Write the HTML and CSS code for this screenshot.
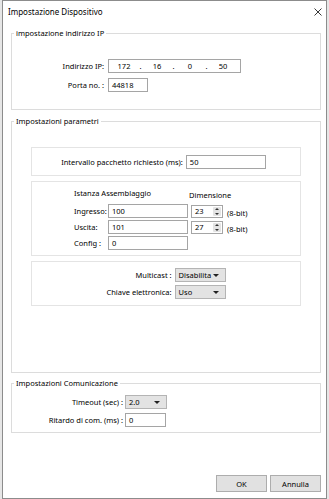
FILE: index.html
```html
<!DOCTYPE html>
<html>
<head>
    <title>Impostazione Dispositivo</title>
    <meta name="viewport" content="width=device-width, initial-scale=1">
    <link rel="stylesheet" href="styles.css">
</head>
<body>
    <div class="window">
        <div class="titlebar">
            <span class="title">Impostazione Dispositivo</span>
            <svg class="close" width="8" height="8" viewBox="0 0 8 8">
                <path d="M0.5 0.5 L7.5 7.5 M7.5 0.5 L0.5 7.5" stroke="#222" stroke-width="0.9" fill="none"/>
            </svg>
        </div>

        <div class="content">
            <!-- Indirizzo IP -->
            <fieldset class="group group-ip">
                <legend>impostazione indirizzo IP</legend>
                <div class="ip-form">
                    <label>Indirizzo IP:</label>
                    <div class="field ip">
                        <span class="seg">172</span><span class="dot">.</span>
                        <span class="seg">16</span><span class="dot">.</span>
                        <span class="seg">0</span><span class="dot">.</span>
                        <span class="seg">50</span>
                    </div>
                    <label>Porta no. :</label>
                    <div class="field port">44818</div>
                </div>
            </fieldset>

            <!-- Parametri -->
            <fieldset class="group group-params">
                <legend>Impostazioni parametri</legend>

                <div class="box box-rpi">
                    <label>Intervallo pacchetto richiesto (ms):</label>
                    <div class="field rpi">50</div>
                </div>

                <div class="box box-asm">
                    <div class="head head-inst">Istanza Assemblaggio</div>
                    <div class="head head-dim">Dimensione</div>

                    <label>Ingresso:</label>
                    <div class="field inst">100</div>
                    <div class="spin"><span>23</span><i class="spin-btn"></i></div>
                    <span class="unit">(8-bit)</span>

                    <label>Uscita:</label>
                    <div class="field inst">101</div>
                    <div class="spin"><span>27</span><i class="spin-btn"></i></div>
                    <span class="unit">(8-bit)</span>

                    <label>Config :</label>
                    <div class="field inst">0</div>
                </div>

                <div class="box box-opt">
                    <label>Multicast :</label>
                    <div class="combo combo-opt">Disabilita</div>
                    <label>Chiave elettronica:</label>
                    <div class="combo combo-opt">Uso</div>
                </div>
            </fieldset>

            <!-- Comunicazione -->
            <fieldset class="group group-com">
                <legend>Impostazioni Comunicazione</legend>
                <div class="com-form">
                    <label>Timeout (sec) :</label>
                    <div class="combo combo-com">2.0</div>
                    <label>Ritardo di com. (ms) :</label>
                    <div class="field delay">0</div>
                </div>
            </fieldset>

            <div class="buttons">
                <button>OK</button>
                <button>Annulla</button>
            </div>
        </div>
    </div>
</body>
</html>
```

FILE: styles.css
```css
* {
    box-sizing: border-box;
}

body {
    margin: 0;
    background-color: #e6e6e6;
    color: #000;
    font-family: "Noto Sans", sans-serif;
    font-size: 7.5px;
}

.window {
    width: 325px;
    height: 499px;
    margin-left: 2px;
    background-color: #fff;
    border: 1px solid #8c8c8c;
    display: flex;
    flex-direction: column;
}

/* Barra del titolo */
.titlebar {
    height: 21px;
    display: flex;
    align-items: center;
    justify-content: space-between;
    padding: 0 4px 0 5px;
}

.title {
    font-size: 8px;
}

.content {
    flex: 1;
    display: flex;
    flex-direction: column;
    padding: 5px 5px 6px 8px;
}

/* Gruppi */
.group {
    margin: 0;
    min-width: 0;
    border: 1px solid #dcdcdc;
}

.group legend {
    line-height: 12px;
    padding: 0 2px;
    margin-left: 2px;
}

.group-ip {
    padding: 20px 0 17px;
}

.group-params {
    margin-top: 5px;
    padding: 20px 19px 66px;
}

.group-params legend {
    margin-left: -17px;
}

.group-com {
    margin-top: 4px;
    padding: 6px 0 5px;
}

label {
    white-space: nowrap;
}

/* Campi */
.field {
    height: 14px;
    border: 1px solid #a5a5a5;
    background-color: #fff;
    padding: 0 3px;
    line-height: 12px;
    white-space: nowrap;
}

.combo {
    height: 14px;
    border: 1px solid #b4b4b4;
    background-color: #e3e3e3;
    padding: 0 3px;
    line-height: 12px;
    position: relative;
}

.combo::after {
    content: "";
    position: absolute;
    right: 6px;
    top: 5px;
    border-left: 3px solid transparent;
    border-right: 3px solid transparent;
    border-top: 3px solid #222;
}

.ip-form {
    display: grid;
    grid-template-columns: 92px auto;
    column-gap: 4px;
    row-gap: 5px;
    align-items: center;
    justify-items: start;
}

.ip-form label,
.com-form label,
.box-opt label {
    justify-self: end;
}

.ip {
    width: 133px;
    display: flex;
    padding: 0 0 0 3px;
}

.ip .seg {
    width: 24px;
    text-align: center;
}

.ip .dot {
    width: 9px;
    text-align: center;
}

.port {
    width: 40px;
}

/* Riquadri interni */
.box {
    border: 1px solid #e4e4e4;
}

.box + .box {
    margin-top: 5px;
}

.box-rpi {
    display: flex;
    align-items: center;
    justify-content: center;
    gap: 3px;
    padding: 7px 5px 6px 0;
}

.rpi {
    width: 80px;
}

.box-asm {
    display: grid;
    grid-template-columns: 34px 80px 32px auto;
    grid-auto-rows: 14px;
    row-gap: 2px;
    align-items: center;
    padding: 6px 0 5px 42px;
}

.box-asm .head {
    align-self: start;
    height: 10px;
    line-height: 10px;
    margin-bottom: -2px;
}

.head-inst {
    grid-column: 1 / 3;
}

.head-dim {
    grid-column: 3 / 5;
    margin-left: 1px;
    padding-top: 2px;
}

.inst {
    width: 80px;
}

.spin {
    width: 32px;
    height: 13px;
    margin-left: 3px;
    align-self: end;
    border: 1px solid #a5a5a5;
    display: flex;
    align-items: center;
    justify-content: space-between;
    padding: 0 1px 0 3px;
    line-height: 11px;
}

.spin-btn {
    width: 8px;
    height: 9px;
    background-color: #e3e3e3;
    border-radius: 1px;
    position: relative;
}

.spin-btn::before,
.spin-btn::after {
    content: "";
    position: absolute;
    left: 2px;
    border-left: 2px solid transparent;
    border-right: 2px solid transparent;
}

.spin-btn::before {
    top: 1px;
    border-bottom: 2px solid #333;
}

.spin-btn::after {
    bottom: 1px;
    border-top: 2px solid #333;
}

.unit {
    margin-left: 7px;
    align-self: end;
}

.box-opt {
    display: grid;
    grid-template-columns: auto 51px;
    justify-content: center;
    column-gap: 3px;
    row-gap: 3px;
    align-items: center;
    padding: 6px 0 6px;
}

/* Comunicazione */
.com-form {
    display: grid;
    grid-template-columns: 111px auto;
    column-gap: 2px;
    row-gap: 4px;
    align-items: center;
    justify-items: start;
}

.combo-com {
    width: 42px;
}

.delay {
    width: 41px;
}

/* Pulsanti */
.buttons {
    margin-top: auto;
    display: flex;
    justify-content: flex-end;
    gap: 3px;
}

.buttons button {
    width: 51px;
    height: 17px;
    padding: 0;
    font-family: inherit;
    font-size: 7.5px;
    color: #000;
    background-color: #e1e1e1;
    border: 1px solid #adadad;
}
```
